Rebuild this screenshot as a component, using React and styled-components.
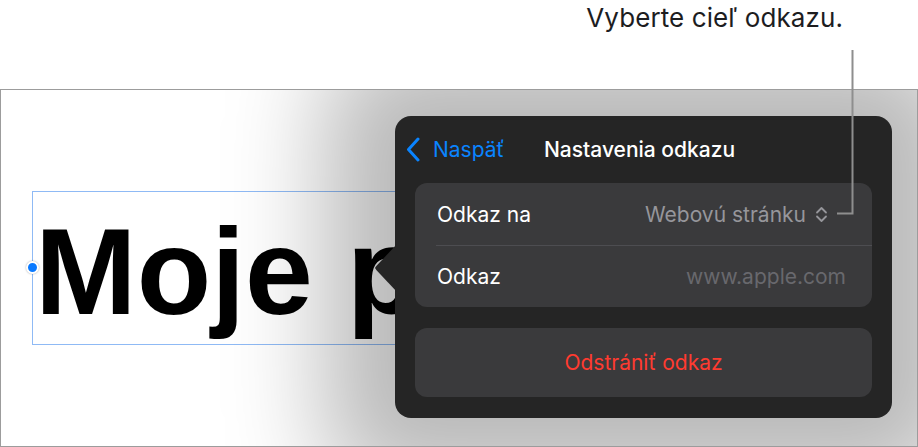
import React from "react";
import styled, { createGlobalStyle } from "styled-components";

const GlobalStyle = createGlobalStyle`
  html, body { margin: 0; padding: 0; background: #ffffff; }
  body { font-family: "Inter", "Noto Sans", sans-serif; -webkit-font-smoothing: antialiased; }
  * { box-sizing: border-box; }
`;

const Page = styled.div`
  position: relative;
  width: 918px;
  height: 447px;
  overflow: hidden;
`;

const CalloutRow = styled.div`
  display: flex;
  justify-content: flex-end;
  padding: 2px 75px 0 0;
  height: 89px;
`;

const CalloutText = styled.div`
  font-family: "Inter", sans-serif;
  font-size: 26px;
  line-height: 32px;
  color: #1d1d1f;
  letter-spacing: 0.1px;
`;

const Leader = styled.svg`
  position: absolute;
  left: 830px;
  top: 48px;
  width: 30px;
  height: 172px;
  z-index: 5;
  overflow: visible;
`;

const Canvas = styled.div`
  position: relative;
  height: 358px;
  border: 1px solid #9c9c9c;
  overflow: hidden;
  background: #ffffff;
`;

const TextBox = styled.div`
  position: relative;
  margin: 101px 0 0 31px;
  width: 560px;
  height: 154px;
  border: 1px solid #8fbaf5;
  padding: 19px 0 0 2px;
`;

const Title = styled.div`
  font-family: "Liberation Sans", Arial, sans-serif;
  font-weight: 700;
  font-size: 122px;
  line-height: 122px;
  color: #000;
  white-space: nowrap;
`;

const Handle = styled.span`
  position: absolute;
  left: -7px;
  top: 69px;
  width: 13px;
  height: 13px;
  border-radius: 50%;
  background: #0a7aff;
  border: 2px solid #ffffff;
  box-shadow: 0 0 2px rgba(0, 0, 0, 0.35);
`;

const Popover = styled.div`
  position: absolute;
  left: 394px;
  top: 26px;
  width: 497px;
  height: 302px;
  background: #252525;
  border-radius: 16px;
  padding: 0 20px 21px;
  display: flex;
  flex-direction: column;
  box-shadow: 0 0 100px 70px rgba(0, 0, 0, 0.28);
  font-family: "Inter", sans-serif;

  &::before {
    content: "";
    position: absolute;
    left: -20px;
    top: 128px;
    width: 22px;
    height: 48px;
    background: #252525;
    clip-path: polygon(100% 0, 6% 46%, 0 50%, 6% 54%, 100% 100%);
  }
`;

const Header = styled.div`
  display: grid;
  grid-template-columns: 1fr auto 1fr;
  align-items: center;
  height: 67px;
  margin: 0 -20px;
  padding: 0 19px 0 11px;
`;

const BackButton = styled.button`
  display: flex;
  align-items: center;
  gap: 13px;
  background: none;
  border: 0;
  padding: 0;
  color: #0a84ff;
  font-family: inherit;
  font-size: 21px;
  justify-self: start;
  cursor: pointer;
`;

const HeaderTitle = styled.div`
  color: #ffffff;
  font-size: 21px;
  font-weight: 500;
`;

const Group = styled.div`
  background: #3a3a3c;
  border-radius: 12px;
  display: flex;
  flex-direction: column;
`;

const Row = styled.div`
  display: flex;
  align-items: center;
  justify-content: space-between;
  height: 62px;
  padding: 0 26px 0 22px;
  position: relative;

  & + &::before {
    content: "";
    position: absolute;
    left: 21px;
    right: 0;
    top: 0;
    height: 1px;
    background: #4d4d51;
  }
`;

const Label = styled.span`
  color: #ffffff;
  font-size: 21px;
`;

const Value = styled.span`
  display: flex;
  align-items: center;
  gap: 9px;
  color: ${(p) => (p.$muted ? "#68686d" : "#96969b")};
  font-size: 21px;
`;

const SelectIcon = styled.svg`
  width: 13px;
  height: 17px;
  margin-right: 18px;
`;

const DangerButton = styled.button`
  margin-top: 21px;
  height: 69px;
  border: 0;
  border-radius: 12px;
  background: #3a3a3c;
  color: #ff3b30;
  font-family: inherit;
  font-size: 21px;
  cursor: pointer;
`;

export default function App() {
  return (
    <>
      <GlobalStyle />
      <Page>
        <CalloutRow>
          <CalloutText>Vyberte cieľ odkazu.</CalloutText>
        </CalloutRow>
        <Leader viewBox="0 0 30 172">
          <path d="M22.5 2 V165.5 H7" fill="none" stroke="#8e8e8e" strokeWidth="2" />
        </Leader>
        <Canvas>
          <TextBox>
            <Handle />
            <Title>Moje p</Title>
          </TextBox>
          <Popover>
            <Header>
              <BackButton>
                <svg width="14" height="25" viewBox="0 0 14 25">
                  <path d="M12 2 L2.5 12.5 L12 23" fill="none" stroke="#0a84ff" strokeWidth="3" strokeLinecap="round" strokeLinejoin="round" />
                </svg>
                Naspäť
              </BackButton>
              <HeaderTitle>Nastavenia odkazu</HeaderTitle>
              <span />
            </Header>
            <Group>
              <Row>
                <Label>Odkaz na</Label>
                <Value>
                  Webovú stránku
                  <SelectIcon viewBox="0 0 13 17">
                    <path d="M2 6.5 L6.5 2 L11 6.5 M2 10.5 L6.5 15 L11 10.5" fill="none" stroke="#96969b" strokeWidth="1.8" strokeLinecap="round" strokeLinejoin="round" />
                  </SelectIcon>
                </Value>
              </Row>
              <Row>
                <Label>Odkaz</Label>
                <Value $muted>www.apple.com</Value>
              </Row>
            </Group>
            <DangerButton>Odstrániť odkaz</DangerButton>
          </Popover>
        </Canvas>
      </Page>
    </>
  );
}
